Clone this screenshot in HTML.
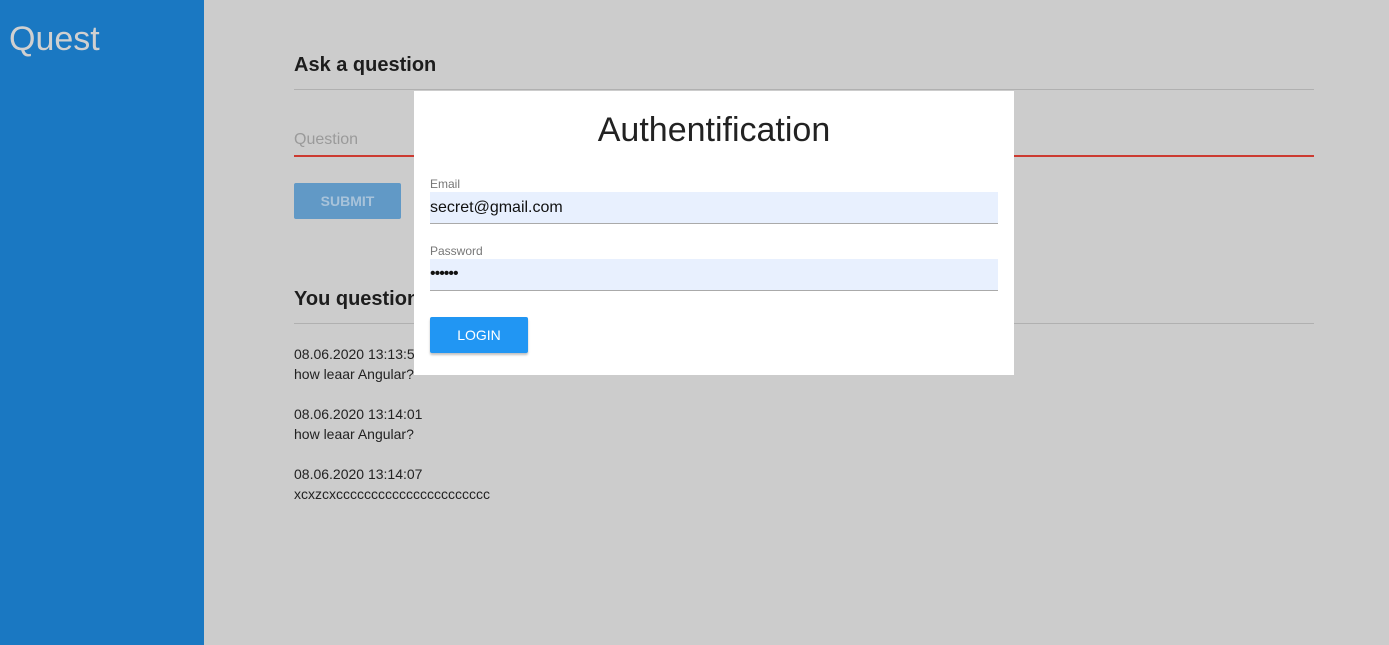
<!DOCTYPE html>
<html><head><style>
body{margin:0;width:1389px;height:645px;background:#cccccc;font-family:"Liberation Sans",sans-serif;position:relative;overflow:hidden}
.abs{position:absolute}
.side{left:0;top:0;width:204px;height:645px;background:#1a78c2}
.t{white-space:nowrap}
</style></head><body>
<div class="abs side"></div>
<div class="abs t" style="left:9px;top:20px;font-size:34px;color:#d0d0d0">Quest</div>
<div class="abs t" style="left:294px;top:54px;font-size:20px;font-weight:bold;color:#1d1d1d">Ask a question</div>
<div class="abs" style="left:294px;top:89px;width:1020px;height:1px;background:#b0b0b0"></div>
<div class="abs t" style="left:294px;top:131px;font-size:16px;color:#9a9a9a">Question</div>
<div class="abs" style="left:294px;top:155px;width:1020px;height:2px;background:#cc3a30"></div>
<div class="abs" style="left:294px;top:183px;width:107px;height:36px;background:#6199c6;border-radius:2px;color:#a8c3da;font-size:14px;font-weight:bold;text-align:center;line-height:36px">SUBMIT</div>
<div class="abs t" style="left:294px;top:288px;font-size:20px;font-weight:bold;color:#1d1d1d">You questions</div>
<div class="abs" style="left:294px;top:323px;width:1020px;height:1px;background:#b0b0b0"></div>
<div class="abs" style="left:294px;top:344px;font-size:14px;line-height:20px;color:#222">08.06.2020 13:13:55<br>how leaar Angular?<br><br>08.06.2020 13:14:01<br>how leaar Angular?<br><br>08.06.2020 13:14:07<br>xcxzcxcccccccccccccccccccccc</div>
<div class="abs" style="left:414px;top:91px;width:600px;height:284px;background:#fff">
<div class="abs t" style="left:0;width:600px;top:20px;text-align:center;font-size:34px;color:#222">Authentification</div>
<div class="abs t" style="left:16px;top:86px;font-size:12px;color:#777">Email</div>
<div class="abs" style="left:16px;top:101px;width:568px;height:31px;background:#e8f0fe;border-bottom:1px solid #aaa"></div>
<div class="abs t" style="left:16px;top:108px;font-size:16px;color:#111">secret@gmail.com</div>
<div class="abs t" style="left:16px;top:153px;font-size:12px;color:#777">Password</div>
<div class="abs" style="left:16px;top:168px;width:568px;height:31px;background:#e8f0fe;border-bottom:1px solid #aaa"></div>
<div class="abs t" style="left:16px;top:174px;font-size:16px;color:#111;letter-spacing:-1px">••••••</div>
<div class="abs" style="left:16px;top:226px;width:98px;height:36px;background:#2196f3;border-radius:2px;box-shadow:0 2px 2px rgba(0,0,0,.25);color:#fff;font-size:14px;text-align:center;line-height:36px">LOGIN</div>
</div>
</body></html>
